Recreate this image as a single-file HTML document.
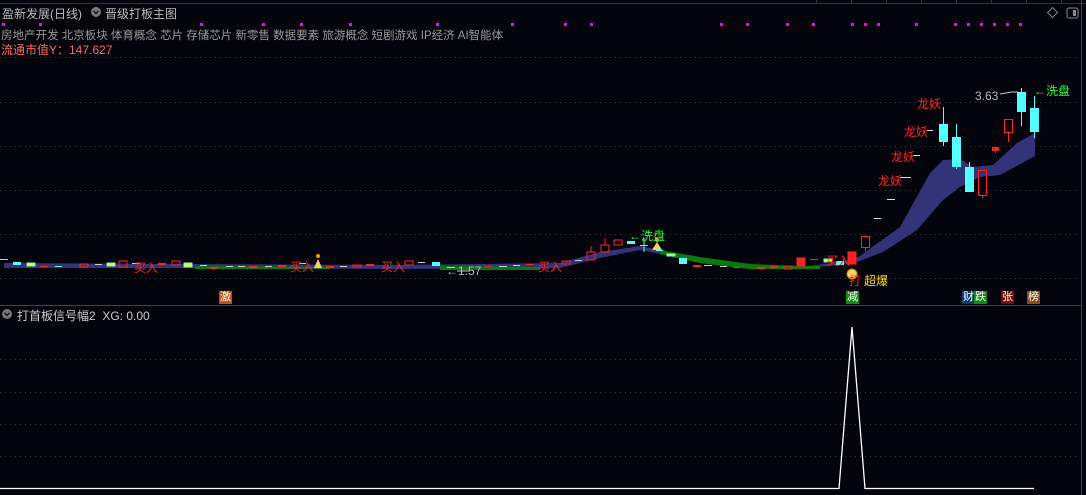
<!DOCTYPE html>
<html><head><meta charset="utf-8"><style>
html,body{margin:0;padding:0;background:#04040c;width:1086px;height:495px;overflow:hidden}
body{position:relative;font-family:"Liberation Sans","Noto Sans CJK SC",sans-serif}
.t{position:absolute;white-space:nowrap}
.b{position:absolute;width:13px;height:13px;font-size:11px;line-height:13px;text-align:center;color:#fff}
</style></head><body>
<svg width="1086" height="495" style="position:absolute;left:0;top:0">
<g stroke="#3a3a48" stroke-dasharray="1 4" stroke-width="1">
<line x1="0" y1="57.5" x2="1080" y2="57.5"/><line x1="0" y1="102.5" x2="1080" y2="102.5"/><line x1="0" y1="146.5" x2="1080" y2="146.5"/><line x1="0" y1="190.5" x2="1080" y2="190.5"/><line x1="0" y1="234.5" x2="1080" y2="234.5"/><line x1="0" y1="278.5" x2="1080" y2="278.5"/>
<line x1="0" y1="359.5" x2="1080" y2="359.5"/><line x1="0" y1="392.5" x2="1080" y2="392.5"/><line x1="0" y1="424.5" x2="1080" y2="424.5"/><line x1="0" y1="456.5" x2="1080" y2="456.5"/>
</g>
<line x1="0" y1="3.5" x2="1086" y2="3.5" stroke="#333"/>
<g stroke="#333"><line x1="816.5" y1="0" x2="816.5" y2="4"/><line x1="851.5" y1="0" x2="851.5" y2="4"/><line x1="886.5" y1="0" x2="886.5" y2="4"/><line x1="921.5" y1="0" x2="921.5" y2="4"/><line x1="956.5" y1="0" x2="956.5" y2="4"/><line x1="991.5" y1="0" x2="991.5" y2="4"/><line x1="1026.5" y1="0" x2="1026.5" y2="4"/><line x1="1061.5" y1="0" x2="1061.5" y2="4"/></g>
<line x1="0" y1="305.5" x2="1081" y2="305.5" stroke="#444"/>
<line x1="1081.5" y1="0" x2="1081.5" y2="495" stroke="#444"/>
<g fill="#f0f">
<rect x="2" y="23" width="3" height="3"/><rect x="39" y="23" width="3" height="3"/><rect x="200" y="23" width="3" height="3"/><rect x="262" y="23" width="3" height="3"/><rect x="300" y="23" width="3" height="3"/><rect x="349" y="23" width="3" height="3"/><rect x="436" y="23" width="3" height="3"/><rect x="511" y="23" width="3" height="3"/><rect x="564" y="23" width="3" height="3"/><rect x="590" y="23" width="3" height="3"/><rect x="720" y="23" width="3" height="3"/><rect x="746" y="23" width="3" height="3"/><rect x="786" y="23" width="3" height="3"/><rect x="812" y="23" width="3" height="3"/><rect x="851" y="23" width="3" height="3"/><rect x="864" y="23" width="3" height="3"/><rect x="877" y="23" width="3" height="3"/><rect x="915" y="23" width="3" height="3"/><rect x="954" y="23" width="3" height="3"/><rect x="967" y="23" width="3" height="3"/><rect x="980" y="23" width="3" height="3"/><rect x="993" y="23" width="3" height="3"/><rect x="1006" y="23" width="3" height="3"/><rect x="1019" y="23" width="3" height="3"/>
</g>
<path d="M4,263 L180,264 L400,265 L560,263 L600,252 L640,246 L660,250 L700,258 L750,264 L800,267 L840,262 L857,258 L900,227 L930,173 L943,160 L960,159 L973,167 L993,165 L1017,143 L1035,133 L1035,156 L1000,175 L980,177 L960,187 L943,200 L917,230 L883,252 L857,262 L830,266 L800,268 L750,268 L700,262 L660,254 L640,250 L600,258 L560,268 L400,269 L180,268 L4,268 Z" fill="#33337a"/>
<path d="M660,250 L700,257 L750,264 L800,266 L820,266 L820,269 L750,269 L700,263 L660,254 Z" fill="#0a7a0a"/>
<path d="M195,266 L330,267 L330,269 L195,269Z M440,266 L540,267 L540,270 L440,270Z" fill="#0a7a0a"/>
<g stroke-width="1">
<line x1="0" y1="259.5" x2="8" y2="259.5" stroke="#5ff"/><rect x="13" y="262" width="8" height="3" fill="#5ff"/><rect x="27" y="263" width="8" height="3" fill="#ff0" stroke="#5ff"/>
<line x1="40" y1="266.5" x2="48" y2="266.5" stroke="#f22"/><line x1="55" y1="266.5" x2="62" y2="266.5" stroke="#5ff"/><rect x="80" y="264" width="8" height="3" fill="none" stroke="#f22"/><line x1="95" y1="264.5" x2="102" y2="264.5" stroke="#ccc"/><rect x="107" y="263" width="8" height="3" fill="#ff0" stroke="#5ff"/>
<rect x="119" y="261" width="8" height="6" fill="none" stroke="#f22"/><line x1="132" y1="263.5" x2="140" y2="263.5" stroke="#5ff"/><rect x="158" y="263" width="8" height="2" fill="#f22"/><rect x="172" y="261" width="8" height="4" fill="none" stroke="#f22"/><rect x="184" y="263" width="8" height="4" fill="#ff0" stroke="#5ff"/>
<line x1="200" y1="265.5" x2="207" y2="265.5" stroke="#5ff"/><rect x="210" y="267" width="8" height="2" fill="#f22"/><line x1="226" y1="266.5" x2="233" y2="266.5" stroke="#ccc"/><line x1="238" y1="266.5" x2="245" y2="266.5" stroke="#ccc"/><rect x="249" y="266" width="8" height="2" fill="#f22"/><line x1="265" y1="266.5" x2="272" y2="266.5" stroke="#ccc"/>
<rect x="278" y="265" width="8" height="2" fill="#f22"/><line x1="299" y1="263.5" x2="306" y2="263.5" stroke="#5ff"/><rect x="326" y="266" width="8" height="2" fill="#f22"/><line x1="340" y1="266.5" x2="347" y2="266.5" stroke="#ccc"/><rect x="353" y="265" width="8" height="2" fill="none" stroke="#f22"/><rect x="366" y="264" width="8" height="2" fill="#f22"/>
<rect x="405" y="261" width="8" height="4" fill="none" stroke="#f22"/><line x1="418" y1="262.5" x2="425" y2="262.5" stroke="#ccc"/><rect x="432" y="262" width="8" height="4" fill="#5ff"/><line x1="447" y1="267.5" x2="455" y2="267.5" stroke="#5ff"/>
<line x1="485" y1="266.5" x2="492" y2="266.5" stroke="#f22"/><line x1="499" y1="266.5" x2="507" y2="266.5" stroke="#ccc"/><line x1="513" y1="265.5" x2="520" y2="265.5" stroke="#ccc"/><line x1="526" y1="264.5" x2="534" y2="264.5" stroke="#f22"/><rect x="562" y="261" width="8" height="3" fill="none" stroke="#f22"/><line x1="575" y1="260.5" x2="582" y2="260.5" stroke="#ccc"/>
<rect x="587" y="252" width="8" height="8" fill="none" stroke="#f22"/><line x1="591" y1="246" x2="591" y2="252" stroke="#f22"/>
<rect x="601" y="245" width="8" height="7" fill="none" stroke="#f22"/><line x1="605" y1="238" x2="605" y2="245" stroke="#f22"/>
<rect x="614" y="240" width="8" height="5" fill="none" stroke="#f22"/><rect x="627" y="241" width="8" height="3" fill="#5ff"/><line x1="640" y1="245.5" x2="648" y2="245.5" stroke="#5ff"/><line x1="644" y1="238" x2="644" y2="252" stroke="#5ff"/>
<line x1="656" y1="250.5" x2="663" y2="250.5" stroke="#5ff"/><rect x="667" y="254" width="8" height="2" fill="#ff0" stroke="#5ff"/><rect x="679" y="258" width="8" height="6" fill="#5ff"/>
<rect x="693" y="265" width="8" height="2" fill="#f22"/><line x1="704" y1="265.5" x2="712" y2="265.5" stroke="#5ff"/><line x1="720" y1="266.5" x2="727" y2="266.5" stroke="#ccc"/><line x1="733" y1="267.5" x2="740" y2="267.5" stroke="#f22"/><rect x="757" y="267" width="8" height="2" fill="#f22"/><rect x="770" y="266" width="8" height="2" fill="#f22"/><rect x="784" y="266" width="8" height="3" fill="none" stroke="#f22"/>
<rect x="797" y="258" width="8" height="8" fill="#f22" stroke="#f22"/><line x1="810" y1="259.5" x2="818" y2="259.5" stroke="#f22"/><rect x="824" y="259" width="8" height="3" fill="#ff0" stroke="#5ff"/><rect x="836" y="261" width="8" height="4" fill="#5ff"/>
<rect x="848" y="252" width="8" height="12" fill="#f22" stroke="#f22"/>
<rect x="861.5" y="236.5" width="8" height="11" fill="none" stroke="#f22"/><line x1="865.5" y1="247" x2="865.5" y2="251" stroke="#f22"/>
<g stroke="#ddd"><line x1="874" y1="218.5" x2="881" y2="218.5"/><line x1="887" y1="199.5" x2="895" y2="199.5"/><line x1="900" y1="177.5" x2="911" y2="177.5"/><line x1="913" y1="155.5" x2="920" y2="155.5"/><line x1="927" y1="130.5" x2="933" y2="130.5"/></g>
<line x1="943.5" y1="107" x2="943.5" y2="146" stroke="#5ff"/><rect x="939" y="124" width="9" height="18" fill="#5ff"/>
<line x1="956.5" y1="124" x2="956.5" y2="169" stroke="#5ff"/><rect x="952" y="137" width="9" height="30" fill="#5ff"/>
<line x1="969.5" y1="162" x2="969.5" y2="192" stroke="#5ff"/><rect x="965" y="167" width="9" height="25" fill="#5ff"/>
<rect x="978.5" y="170.5" width="8" height="25" fill="none" stroke="#f22"/><line x1="982.5" y1="195" x2="982.5" y2="198" stroke="#f22"/>
<rect x="992.5" y="147.5" width="6" height="3" fill="#f22" stroke="#f22"/><line x1="995.5" y1="150" x2="995.5" y2="153" stroke="#f22"/>
<rect x="1004.5" y="119.5" width="8" height="13" fill="none" stroke="#f22"/><line x1="1008.5" y1="132" x2="1008.5" y2="142" stroke="#f22"/>
<line x1="1021.5" y1="88" x2="1021.5" y2="126" stroke="#5ff"/><rect x="1017" y="92" width="9" height="20" fill="#5ff"/>
<line x1="1034.5" y1="96" x2="1034.5" y2="138" stroke="#5ff"/><rect x="1030" y="108" width="9" height="24" fill="#5ff"/>
<path d="M1000,94 L1012,92 L1018,92" stroke="#ccc" fill="none"/>
<path d="M457,271 L470,271" stroke="#ccc"/>
</g>
<circle cx="318" cy="256" r="2" fill="#f90"/><path d="M314,268 L318,259 L322,268Z" fill="#fc6"/>
<circle cx="657" cy="240" r="2" fill="#f90"/><path d="M652,250 L657,242 L662,250Z" fill="#fc6"/>
<circle cx="852" cy="274" r="5" fill="#fc6" stroke="#c80"/>
<path d="M0,488.5 L839,488.5 L852,327 L865,488.5 L1034,488.5" fill="none" stroke="#fff" stroke-width="1.3"/>
<circle cx="96" cy="12" r="5" fill="#777"/><path d="M93.5,11 L96,13.5 L98.5,11" stroke="#111" fill="none" stroke-width="1.3"/>
<circle cx="7" cy="314" r="5" fill="#777"/><path d="M4.5,313 L7,315.5 L9.5,313" stroke="#111" fill="none" stroke-width="1.3"/>
<rect x="1049" y="9" width="7" height="7" transform="rotate(45 1052.5 12.5)" fill="none" stroke="#888"/>
<rect x="1067" y="8" width="11" height="10" rx="2" fill="none" stroke="#888"/><rect x="1073" y="10" width="3" height="6" fill="#888"/>
</svg>
<div class="t" style="left:2px;top:5px;font-size:12px;color:#bbb">盈新发展(日线)</div>
<div class="t" style="left:105px;top:5px;font-size:12px;color:#bbb">晋级打板主图</div>
<div class="t" style="left:1px;top:27px;font-size:11.5px;color:#999">房地产开发 北京板块 体育概念 芯片 存储芯片 新零售 数据要素 旅游概念 短剧游戏 IP经济 AI智能体</div>
<div class="t" style="left:1px;top:41px;font-size:12px;color:#ff6666">流通市值Y：147.627</div>
<div class="t" style="left:17px;top:307px;font-size:12px;color:#ccc">打首板信号幅2&nbsp; XG: 0.00</div>
<div class="t" style="left:134px;top:259px;font-size:12px;color:#f22">买入</div>
<div class="t" style="left:290px;top:258px;font-size:12px;color:#f22">买入</div>
<div class="t" style="left:381px;top:258px;font-size:12px;color:#f22">买入</div>
<div class="t" style="left:538px;top:258px;font-size:12px;color:#f22">买入</div>
<div class="t" style="left:826px;top:252px;font-size:12px;color:#f22">买入</div>
<div class="t" style="left:446px;top:264px;font-size:12px;color:#bbb">←1.57</div>
<div class="t" style="left:629px;top:227px;font-size:12px;color:#2f2">←洗盘</div>
<div class="t" style="left:1034px;top:82px;font-size:12px;color:#2f2">←洗盘</div>
<div class="t" style="left:975px;top:89px;font-size:12px;color:#bbb">3.63</div>
<div class="t" style="left:917px;top:95px;font-size:12px;color:#f22">龙妖</div>
<div class="t" style="left:904px;top:123px;font-size:12px;color:#f22">龙妖</div>
<div class="t" style="left:891px;top:148px;font-size:12px;color:#f22">龙妖</div>
<div class="t" style="left:878px;top:172px;font-size:12px;color:#f22">龙妖</div>
<div class="t" style="left:849px;top:272px;font-size:12px;color:#f22">打</div>
<div class="t" style="left:864px;top:272px;font-size:12px;color:#fd0">超爆</div>
<div class="b" style="left:219px;top:291px;background:#c0501a">激</div>
<div class="b" style="left:846px;top:291px;background:#128a12">减</div>
<div class="b" style="left:962px;top:291px;background:#0d3a6a">财</div>
<div class="b" style="left:974px;top:291px;background:#128a12">跌</div>
<div class="b" style="left:1001px;top:291px;background:#7a0a0a">张</div>
<div class="b" style="left:1027px;top:291px;background:#8a4a12">榜</div>
</body></html>
